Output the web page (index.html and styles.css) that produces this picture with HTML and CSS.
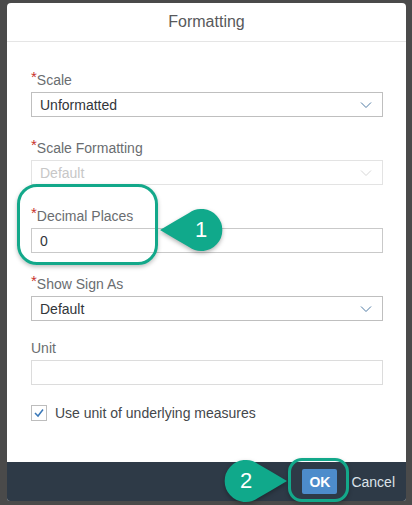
FILE: index.html
```html
<!DOCTYPE html>
<html>
<head>
<meta charset="utf-8">
<link rel="stylesheet" href="styles.css">
</head>
<body>
<div class="dialog">
  <div class="header">Formatting</div>
  <div class="content">
    <div class="field">
      <div class="label"><span class="req">*</span>Scale</div>
      <div class="select"><span>Unformatted</span><svg class="chev" width="12" height="8" viewBox="0 0 12 8"><path d="M1 1.5 L6 6.5 L11 1.5" fill="none" stroke="#4f7aa3" stroke-width="1"/></svg></div>
    </div>
    <div class="field">
      <div class="label"><span class="req">*</span>Scale Formatting</div>
      <div class="select disabled"><span>Default</span><svg class="chev" width="12" height="8" viewBox="0 0 12 8"><path d="M1 1.5 L6 6.5 L11 1.5" fill="none" stroke="#d6d6d6" stroke-width="1"/></svg></div>
    </div>
    <div class="field">
      <div class="label"><span class="req">*</span>Decimal Places</div>
      <div class="input"><span>0</span></div>
    </div>
    <div class="field">
      <div class="label"><span class="req">*</span>Show Sign As</div>
      <div class="select"><span>Default</span><svg class="chev" width="12" height="8" viewBox="0 0 12 8"><path d="M1 1.5 L6 6.5 L11 1.5" fill="none" stroke="#4f7aa3" stroke-width="1"/></svg></div>
    </div>
    <div class="field unit">
      <div class="label">Unit</div>
      <div class="input"></div>
    </div>
    <div class="check-row">
      <div class="checkbox"><svg width="12" height="10" viewBox="0 0 12 10"><path d="M2 5 L5 8 L10 1.5" fill="none" stroke="#3a78b8" stroke-width="1.5"/></svg></div>
      <span class="check-label">Use unit of underlying measures</span>
    </div>
  </div>
  <div class="footer">
    <div class="ok">OK</div>
    <div class="cancel">Cancel</div>
  </div>
</div>

<div class="hl hl1"></div>
<div class="hl hl2"></div>

<svg class="callout c1" width="64" height="44" viewBox="0 0 64 44"><path d="M1 22 Q16 13 30 5 A21 21 0 1 1 30 39 Q16 31 1 22 Z" fill="#10a98b"/></svg>
<div class="num n1">1</div>
<svg class="callout c2" width="64" height="44" viewBox="0 0 64 44"><path d="M1 22 Q16 13 30 5 A21 21 0 1 1 30 39 Q16 31 1 22 Z" fill="#10a98b"/></svg>
<div class="num n2">2</div>
</body>
</html>
```
FILE: styles.css
```css
html, body {
  margin: 0;
  padding: 0;
}
body {
  width: 412px;
  height: 505px;
  background: #4a4a4a;
  font-family: "Liberation Sans", Arial, sans-serif;
  overflow: hidden;
  position: relative;
}
.dialog {
  position: absolute;
  left: 7px;
  top: 3px;
  width: 399px;
  height: 498px;
  background: #fff;
  border-radius: 4px 4px 3px 3px;
  display: flex;
  flex-direction: column;
  overflow: hidden;
}
.header {
  height: 38px;
  border-bottom: 1px solid #e5e5e5;
  display: flex;
  align-items: center;
  justify-content: center;
  font-size: 16px;
  color: #58595b;
  flex: none;
}
.content {
  flex: 1;
  padding: 30px 23px 0 24px;
  display: flex;
  flex-direction: column;
}
.field {
  display: flex;
  flex-direction: column;
  gap: 4px;
  margin-bottom: 23px;
}
.field.unit {
  margin-top: -4px;
}
.label {
  font-size: 14px;
  line-height: 16px;
  height: 16px;
  color: #6a6d70;
  position: relative;
}
.req {
  color: #c8312b;
  font-size: 15px;
  line-height: 10px;
  vertical-align: 3px;
}
.select, .input {
  height: 23px;
  border: 1px solid #bfbfbf;
  display: flex;
  align-items: center;
  justify-content: space-between;
  padding: 0 10px 0 8px;
  font-size: 14px;
  color: #32363a;
}
.input {
  border-color: #c9c9c9;
}
.field.unit .input {
  border-color: #dcdcdc;
}
.select.disabled {
  border-color: #e3e3e3;
  color: #c7c7c7;
}
.chev {
  display: block;
}
.check-row {
  display: flex;
  align-items: center;
  gap: 8px;
  margin-top: -3px;
}
.checkbox {
  width: 14px;
  height: 14px;
  border: 1px solid #bdbdbd;
  display: flex;
  align-items: center;
  justify-content: center;
}
.check-label {
  font-size: 14px;
  color: #44474b;
}
.footer {
  flex: none;
  height: 39px;
  background: #2e3a47;
  display: flex;
  align-items: center;
  justify-content: flex-end;
  padding-right: 11px;
  gap: 14px;
}
.ok {
  width: 35px;
  height: 25px;
  background: #4d8ccb;
  border-radius: 2px;
  color: #fff;
  font-size: 14px;
  font-weight: bold;
  display: flex;
  align-items: center;
  justify-content: center;
}
.cancel {
  color: #dce3ea;
  font-size: 14px;
}
.hl {
  position: absolute;
  border: 3px solid #13a88a;
  box-shadow: 0 2px 4px rgba(0,0,0,0.25);
}
.hl1 {
  left: 17px;
  top: 184px;
  width: 135px;
  height: 75px;
  border-radius: 20px;
}
.hl2 {
  left: 288px;
  top: 458px;
  width: 55px;
  height: 38px;
  border-radius: 14px;
}
.callout {
  position: absolute;
  filter: drop-shadow(0 2px 2px rgba(0,0,0,0.3));
}
.c1 {
  left: 159px;
  top: 208px;
}
.c2 {
  left: 224px;
  top: 459px;
  transform: scaleX(-1);
}
.num {
  position: absolute;
  width: 30px;
  text-align: center;
  color: #fff;
  font-size: 22px;
  line-height: 24px;
}
.n1 {
  left: 186px;
  top: 218px;
}
.n2 {
  left: 231px;
  top: 469px;
}
```
